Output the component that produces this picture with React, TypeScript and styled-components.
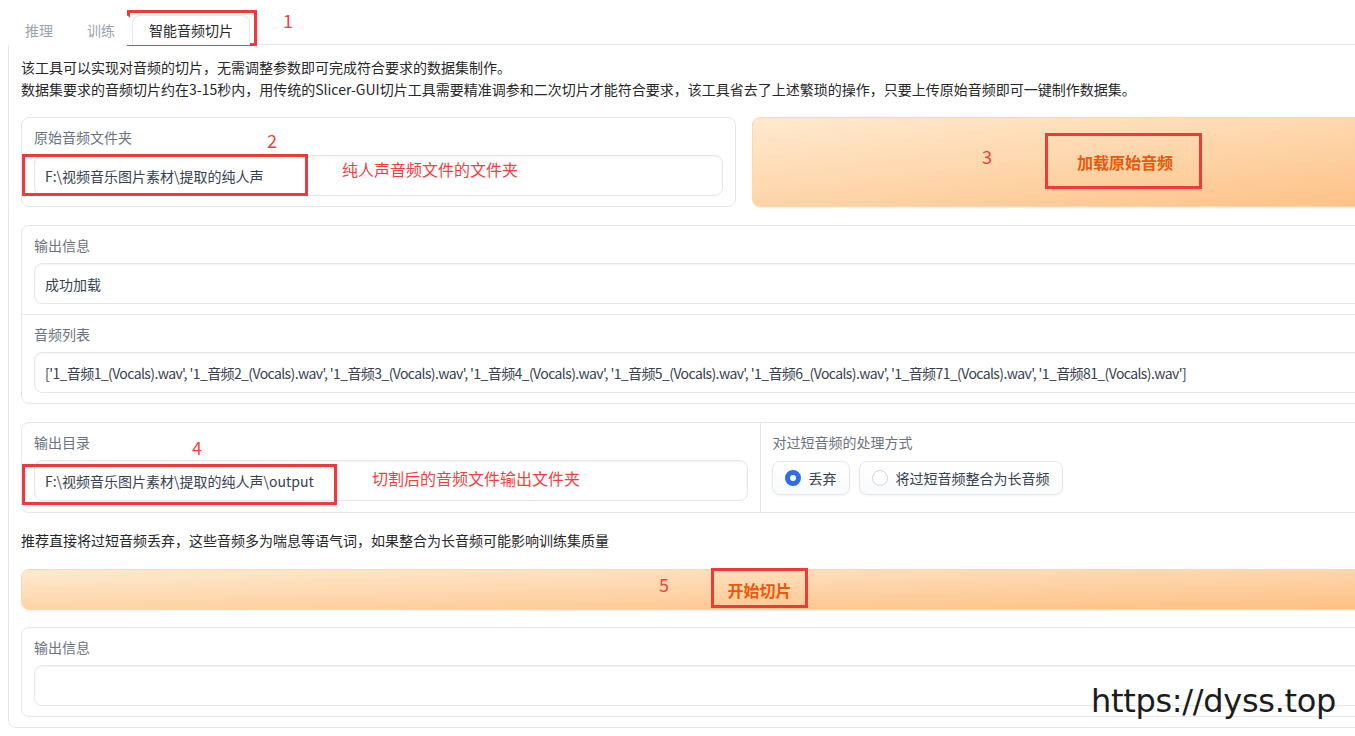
import React from 'react';
import styled, { createGlobalStyle } from 'styled-components';

const GlobalStyle = createGlobalStyle`
  html, body {
    margin: 0;
    padding: 0;
    background: #ffffff;
    overflow: hidden;
  }
  body {
    font-family: "Noto Sans CJK SC", "Noto Sans", sans-serif;
    color: #1f2937;
  }
`;

const Page = styled.div`
  position: relative;
  width: 1520px;
  padding: 15px 0 0 8px;
  box-sizing: border-box;
`;

const TabBar = styled.div`
  display: flex;
  height: 30px;
  margin-bottom: -1px;
  position: relative;
  z-index: 1;
`;

const TabButton = styled.div<{ $active?: boolean }>`
  display: flex;
  align-items: center;
  padding: 0 16px;
  font-size: 14px;
  border: 1px solid ${p => (p.$active ? '#e5e7eb' : 'transparent')};
  border-bottom-color: ${p => (p.$active ? '#ffffff' : 'transparent')};
  border-radius: 8px 8px 0 0;
  background: #ffffff;
  color: ${p => (p.$active ? '#27272a' : '#9ca3af')};
`;

const TabPanel = styled.div`
  width: 1503px;
  box-sizing: border-box;
  border: 1px solid #e5e7eb;
  border-radius: 0 0 8px 8px;
  padding: 12px 12px 10px;
  display: flex;
  flex-direction: column;
  gap: 17px;
`;

const Prose = styled.div`
  font-size: 14px;
  line-height: 21.5px;
  color: #27272a;
  p {
    margin: 0;
  }
`;

const Row = styled.div`
  display: flex;
  gap: 16px;
  margin-bottom: 1px;
`;

const Block = styled.div<{ $width?: number }>`
  box-sizing: border-box;
  ${p => (p.$width ? `width: ${p.$width}px; flex: none;` : 'flex: 1;')}
  border: 1px solid #e5e7eb;
  border-radius: 8px;
  padding: 10px 12px;
  background: #ffffff;
`;

const Group = styled.div<{ $columns?: boolean }>`
  border: 1px solid #e5e7eb;
  border-radius: 8px;
  background: #ffffff;
  display: ${p => (p.$columns ? 'grid' : 'flex')};
  grid-template-columns: 1fr 1fr;
  flex-direction: column;
  overflow: hidden;
  ${p => p.$columns && 'margin-top: 1px;'}
`;

const GroupItem = styled.div<{ $divider?: 'top' | 'left'; $roomy?: boolean }>`
  padding: 10px 12px ${p => (p.$roomy ? '11px' : '10px')};
  ${p => p.$divider === 'top' && 'border-top: 1px solid #e5e7eb;'}
  ${p => p.$divider === 'left' && 'border-left: 1px solid #e5e7eb;'}
`;

const Label = styled.div`
  font-size: 14px;
  line-height: 18px;
  color: #6b7280;
  margin-bottom: 9px;
`;

const Field = styled.div<{ $tight?: boolean }>`
  box-sizing: border-box;
  height: 41px;
  border: 1px solid #e5e7eb;
  border-radius: 8px;
  box-shadow: inset 0 1px 2px rgba(0, 0, 0, 0.05);
  padding: 0 10px;
  display: flex;
  align-items: center;
  font-size: 14px;
  color: #374151;
  white-space: nowrap;
  overflow: hidden;
  letter-spacing: ${p => (p.$tight ? '-0.6px' : 'normal')};
`;

const PrimaryButton = styled.div<{ $tall?: boolean }>`
  box-sizing: border-box;
  ${p => (p.$tall ? 'flex: 1; height: 90px;' : 'flex: none; height: 41px;')}
  border: 1px solid #fed7aa;
  border-radius: 8px;
  background: linear-gradient(to bottom right, #ffead0, #fdbe80);
  box-shadow: 0 1px 2px rgba(0, 0, 0, 0.05);
  display: flex;
  align-items: center;
  justify-content: center;
  font-size: 16px;
  font-weight: 600;
  color: #ea580c;
`;

const RadioGroup = styled.div`
  display: flex;
  gap: 9px;
  margin-left: -1px;
`;

const RadioItem = styled.div`
  box-sizing: border-box;
  height: 34px;
  margin-top: 1px;
  display: flex;
  align-items: center;
  gap: 8px;
  padding: 0 12px;
  border: 1px solid #e5e7eb;
  border-radius: 8px;
  background: linear-gradient(to bottom, #ffffff, #f9fafb);
  box-shadow: 0 1px 2px rgba(0, 0, 0, 0.05);
  font-size: 14px;
  color: #374151;
`;

const RadioDot = styled.span<{ $checked?: boolean }>`
  box-sizing: border-box;
  width: 16px;
  height: 16px;
  border-radius: 50%;
  background: #ffffff;
  border: ${p => (p.$checked ? '5px solid #2f6eea' : '1px solid #d1d5db')};
`;

const Hint = styled.div`
  font-size: 14px;
  line-height: 21px;
  color: #27272a;
  margin-bottom: 1px;
`;

const Mark = styled.div<{ $x: number; $y: number; $w: number; $h: number }>`
  position: absolute;
  left: ${p => p.$x}px;
  top: ${p => p.$y}px;
  width: ${p => p.$w}px;
  height: ${p => p.$h}px;
  box-sizing: border-box;
  border: 3px solid #f03a3a;
  pointer-events: none;
`;

const Note = styled.div<{ $x: number; $y: number; $size?: number }>`
  position: absolute;
  left: ${p => p.$x}px;
  top: ${p => p.$y}px;
  font-size: ${p => p.$size ?? 16}px;
  line-height: 1;
  color: #f23f3f;
  white-space: nowrap;
  pointer-events: none;
`;

const Watermark = styled.div`
  position: absolute;
  left: 1091px;
  top: 685px;
  font-family: "DejaVu Sans", sans-serif;
  font-size: 32px;
  line-height: 1;
  color: #1c1c1c;
  letter-spacing: -0.3px;
  pointer-events: none;
`;

const files = [1, 2, 3, 4, 5, 6, 71, 81]
  .map(n => `'1_音频${n}_(Vocals).wav'`)
  .join(', ');

export default function App() {
  return (
    <>
      <GlobalStyle />
      <Page>
        <TabBar>
          <TabButton>推理</TabButton>
          <TabButton>训练</TabButton>
          <TabButton $active>智能音频切片</TabButton>
        </TabBar>
        <TabPanel>
          <Prose>
            <p>该工具可以实现对音频的切片，无需调整参数即可完成符合要求的数据集制作。</p>
            <p>
              数据集要求的音频切片约在3-15秒内，用传统的Slicer-GUI切片工具需要精准调参和二次切片才能符合要求，该工具省去了上述繁琐的操作，只要上传原始音频即可一键制作数据集。
            </p>
          </Prose>

          <Row>
            <Block $width={715}>
              <Label>原始音频文件夹</Label>
              <Field>F:\视频音乐图片素材\提取的纯人声</Field>
            </Block>
            <PrimaryButton $tall>加载原始音频</PrimaryButton>
          </Row>

          <Group>
            <GroupItem>
              <Label>输出信息</Label>
              <Field>成功加载</Field>
            </GroupItem>
            <GroupItem $divider="top">
              <Label>音频列表</Label>
              <Field $tight>[{files}]</Field>
            </GroupItem>
          </Group>

          <Group $columns>
            <GroupItem $roomy>
              <Label>输出目录</Label>
              <Field>F:\视频音乐图片素材\提取的纯人声\output</Field>
            </GroupItem>
            <GroupItem $divider="left" $roomy>
              <Label>对过短音频的处理方式</Label>
              <RadioGroup>
                <RadioItem>
                  <RadioDot $checked />
                  丢弃
                </RadioItem>
                <RadioItem>
                  <RadioDot />
                  将过短音频整合为长音频
                </RadioItem>
              </RadioGroup>
            </GroupItem>
          </Group>

          <Hint>推荐直接将过短音频丢弃，这些音频多为喘息等语气词，如果整合为长音频可能影响训练集质量</Hint>

          <PrimaryButton>开始切片</PrimaryButton>

          <Group>
            <GroupItem>
              <Label>输出信息</Label>
              <Field />
            </GroupItem>
          </Group>
        </TabPanel>

        <Mark $x={127} $y={10} $w={130} $h={36} />
        <Note $x={283} $y={11} $size={18}>1</Note>
        <Mark $x={22} $y={154} $w={286} $h={42} />
        <Note $x={267} $y={131} $size={18}>2</Note>
        <Note $x={342} $y={161}>纯人声音频文件的文件夹</Note>
        <Mark $x={1045} $y={133} $w={157} $h={56} />
        <Note $x={982} $y={147} $size={18}>3</Note>
        <Mark $x={22} $y={464} $w={315} $h={41} />
        <Note $x={192} $y={438} $size={18}>4</Note>
        <Note $x={372} $y={470}>切割后的音频文件输出文件夹</Note>
        <Mark $x={711} $y={568} $w={97} $h={40} />
        <Note $x={659} $y={575} $size={18}>5</Note>

        <Watermark>https://dyss.top</Watermark>
      </Page>
    </>
  );
}
